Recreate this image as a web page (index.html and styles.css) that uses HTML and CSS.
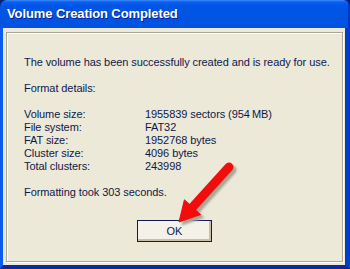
FILE: index.html
```html
<!DOCTYPE html>
<html lang="en">
<head>
    <meta charset="UTF-8">
    <title>Volume Creation Completed</title>
    <link rel="stylesheet" href="styles.css">
</head>
<body>
    <div class="window">
        <!-- Title bar -->
        <div class="titlebar">Volume Creation Completed</div>

        <!-- Dialog body -->
        <div class="frame">
            <div class="group">
                <p class="msg">The volume has been successfully created and is ready for use.</p>
                <p class="msg">Format details:</p>
                <div class="details">
                    <span>Volume size:</span><span>1955839 sectors (954&#8201;MB)</span>
                    <span>File system:</span><span>FAT32</span>
                    <span>FAT size:</span><span>1952768 bytes</span>
                    <span>Cluster size:</span><span>4096 bytes</span>
                    <span>Total clusters:</span><span>243998</span>
                </div>
                <p class="msg">Formatting took 303 seconds.</p>
                <div class="actions">
                    <button class="btn">OK</button>
                </div>
            </div>
        </div>

        <!-- Red pointer arrow -->
        <svg class="arrow" width="350" height="269" viewBox="0 0 350 269">
            <defs>
                <filter id="soft" x="-20%" y="-20%" width="140%" height="140%">
                    <feGaussianBlur stdDeviation="1"/>
                </filter>
            </defs>
            <g fill="#a8a496" stroke="#a8a496" filter="url(#soft)" transform="translate(3,3)">
                <line x1="229" y1="167" x2="190" y2="210" stroke-width="9" stroke-linecap="round"/>
                <polygon points="179,222 184.4,199.8 200.6,214.6" stroke-width="1"/>
            </g>
            <g fill="#f20d0d" stroke="#f20d0d">
                <line x1="229" y1="167" x2="190" y2="210" stroke-width="9" stroke-linecap="round"/>
                <polygon points="179,222 184.4,199.8 200.6,214.6" stroke-width="1"/>
            </g>
        </svg>
    </div>
</body>
</html>
```

FILE: styles.css
```css
/* Page */
body {
    margin: 0;
    padding: 0;
    background: #0a1f7a;
    font-family: Tahoma, "Liberation Sans", Arial, sans-serif;
}

/* Window shell */
.window {
    position: relative;
    width: 350px;
    height: 269px;
    display: flex;
    flex-direction: column;
    overflow: hidden;
    border-radius: 7px 7px 0 0;
}

/* Title bar */
.titlebar {
    height: 28px;
    box-sizing: border-box;
    padding: 6px 0 0 7px;
    background: linear-gradient(180deg, #3d8cf8 0, #0a5ff0 2px, #0055e5 6px, #0053e0 100%);
    color: #fff;
    font-family: "Liberation Sans", Arial, sans-serif;
    font-weight: bold;
    font-size: 13px;
    letter-spacing: -0.1px;
    text-shadow: 1px 1px 0 #0a1f8a;
    box-shadow: inset -2px 0 0 #0036b8;
}

/* Window frame */
.frame {
    flex: 1;
    background: #ece9d8;
    border-left: 3px solid #0a5cf0;
    border-right: 5px solid #003ed0;
    border-bottom: 4px solid #0a2a9a;
    padding: 4px 2px 3px 3px;
    display: flex;
}

/* Etched group box */
.group {
    flex: 1;
    min-width: 0;
    border: 1px solid #aca899;
    box-shadow: 1px 1px 0 #fff, inset 1px 1px 0 #fff;
    padding: 23px 0 0 17px;
    color: #10184a;
    font-family: "Liberation Sans", Arial, sans-serif;
    font-size: 11px;
    line-height: 13px;
    letter-spacing: -0.08px;
}

.msg {
    margin: 0 0 13px;
    white-space: nowrap;
}

/* Details table */
.details {
    display: grid;
    grid-template-columns: 121px auto;
    margin: 9px 0 13px;
}

/* Button row */
.actions {
    display: flex;
    justify-content: center;
    margin: 21px 17px 0 0;
}

.btn {
    width: 75px;
    height: 22px;
    border: 1px solid #10185a;
    border-radius: 0;
    background: #f4f2e8;
    box-shadow: inset -2px -2px 0 #c8bfa8;
    font-family: "Liberation Sans", Arial, sans-serif;
    font-size: 11px;
    color: #10184a;
    padding: 0;
}

/* Overlay arrow */
.arrow {
    position: absolute;
    left: 0;
    top: 0;
    pointer-events: none;
}
```
